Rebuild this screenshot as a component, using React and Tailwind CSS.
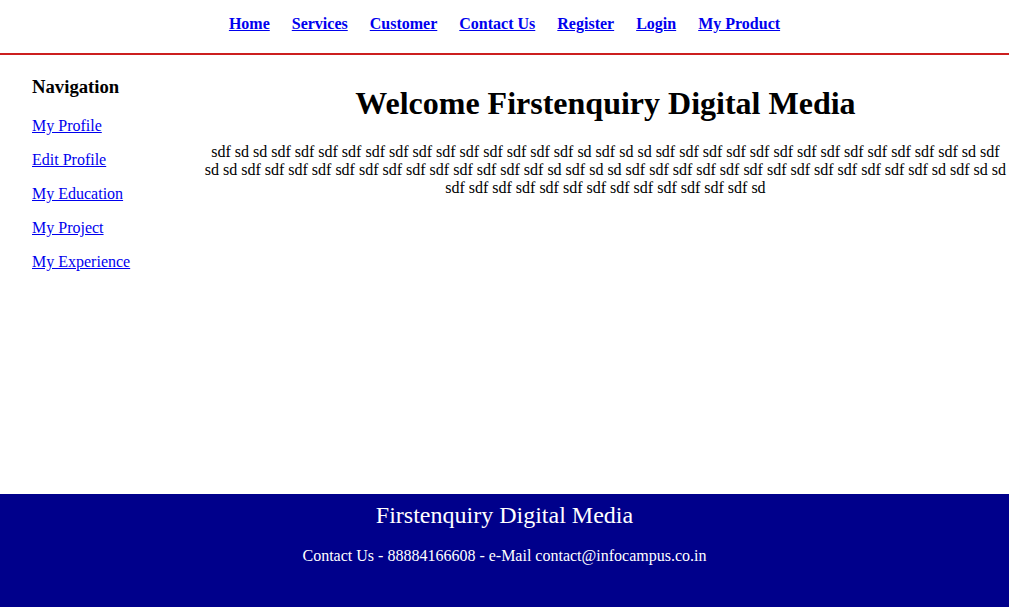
import React from "react";

const navLinks = ["Home", "Services", "Customer", "Contact Us", "Register", "Login", "My Product"];
const sideLinks = ["My Profile", "Edit Profile", "My Education", "My Project", "My Experience"];

const rep = (w, n) => Array(n).fill(w).join(" ");
const lines = [
  `sdf sd sd ${rep("sdf", 13)} sd sdf sd sd ${rep("sdf", 13)} sd sdf`,
  `sd sd ${rep("sdf", 13)} sd sdf sd sd ${rep("sdf", 13)} sd sdf sd sd`,
  `${rep("sdf", 13)} sd`,
];

export default function App() {
  return (
    <div
      className="min-h-screen flex flex-col bg-white text-black"
      style={{ fontFamily: '"Liberation Serif", "Times New Roman", serif' }}
    >
      <header className="h-[55px] border-b-2 border-[#cc1f1f] flex justify-center pt-[15px]">
        <nav className="flex gap-[22px] text-[16px] font-bold leading-[18px]">
          {navLinks.map((l) => (
            <a key={l} href="#" className="text-[#0000ee] underline">
              {l}
            </a>
          ))}
        </nav>
      </header>
      <div className="flex-1 flex">
        <aside className="w-[20%] shrink-0 pl-8 pt-[21px]">
          <h3 className="text-[18.7px] font-bold leading-[22px]">Navigation</h3>
          <ul className="mt-[19px] flex flex-col gap-[16px] text-[16px] leading-[18px]">
            {sideLinks.map((l) => (
              <li key={l}>
                <a href="#" className="text-[#0000ee] underline">
                  {l}
                </a>
              </li>
            ))}
          </ul>
        </aside>
        <main className="flex-1 text-center pt-[30px]">
          <h1 className="text-[32px] font-bold leading-[37px]">Welcome Firstenquiry Digital Media</h1>
          <p className="mt-[21px] text-[16px] leading-[18px] whitespace-nowrap">
            {lines[0]}
            <br />
            {lines[1]}
            <br />
            {lines[2]}
          </p>
        </main>
      </div>
      <footer className="h-[113px] bg-[#00008b] text-white text-center pt-[7px]">
        <div className="text-[24px] leading-[28px]">Firstenquiry Digital Media</div>
        <div className="mt-[18px] text-[16px] leading-[18px]">
          Contact Us - 88884166608 - e-Mail contact@infocampus.co.in
        </div>
      </footer>
    </div>
  );
}
